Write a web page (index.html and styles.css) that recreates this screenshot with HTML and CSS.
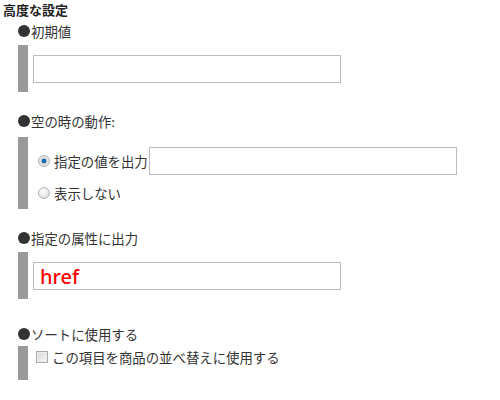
FILE: index.html
```html
<!DOCTYPE html>
<html lang="ja">
<head>
    <meta charset="UTF-8">
    <title>高度な設定</title>
    <link rel="stylesheet" href="styles.css">
</head>
<body>
    <div class="settings">
        <div class="settings-title">高度な設定</div>

        <div class="setting setting-first">
            <div class="setting-label">初期値</div>
            <div class="setting-body">
                <input type="text" class="text-input">
            </div>
        </div>

        <div class="setting setting-empty">
            <div class="setting-label">空の時の動作:</div>
            <div class="setting-body">
                <label class="option">
                    <input type="radio" name="empty" checked>
                    <span>指定の値を出力</span>
                    <input type="text" class="text-input inline-input">
                </label>
                <label class="option">
                    <input type="radio" name="empty">
                    <span>表示しない</span>
                </label>
            </div>
        </div>

        <div class="setting setting-attr">
            <div class="setting-label">指定の属性に出力</div>
            <div class="setting-body">
                <input type="text" class="text-input attr-input" value="href">
            </div>
        </div>

        <div class="setting setting-sort">
            <div class="setting-label">ソートに使用する</div>
            <div class="setting-body">
                <label class="option">
                    <input type="checkbox">
                    <span>この項目を商品の並べ替えに使用する</span>
                </label>
            </div>
        </div>
    </div>
</body>
</html>
```

FILE: styles.css
```css
body {
    margin: 0;
    padding: 0;
    background: #fff;
    color: #333;
    font-family: "Noto Sans CJK JP", "Noto Sans", sans-serif;
    font-size: 13.4px;
}
.settings {
    padding: 0 0 0 3px;
}
.settings-title {
    font-weight: bold;
    font-size: 13px;
    line-height: 20px;
    color: #222;
}
.setting {
    margin-left: 15px;
    margin-bottom: 19px;
}
.setting-first {
    margin-top: 1px;
}
.setting-label {
    display: flex;
    align-items: center;
    line-height: 20px;
    margin-bottom: 4px;
}
.setting-label::before {
    content: "";
    width: 12px;
    height: 12px;
    border-radius: 50%;
    background: #333;
    margin-right: 1px;
}
.setting-empty .setting-label {
    margin-bottom: 6px;
}
.setting-attr {
    margin-bottom: 25px;
}
.setting-sort .setting-label {
    margin-bottom: 2px;
}
.setting-body {
    border-left: 10px solid #9a9a9a;
    padding: 10px 0 9px 5px;
}
.setting-empty .setting-body {
    padding: 10px 0 6px 5px;
}
.setting-sort .setting-body {
    padding: 1px 0 13px 4px;
}
.text-input {
    box-sizing: border-box;
    width: 308px;
    height: 28px;
    border: 1px solid #bcbcbc;
    padding: 0 6px;
    margin: 0;
    font-family: inherit;
    display: block;
}
.attr-input {
    color: #f00;
    font-family: "Noto Sans", sans-serif;
    font-size: 20px;
    font-weight: 500;
    padding-top: 1px;
}
.option {
    display: flex;
    align-items: center;
    height: 20px;
}
.option + .option {
    margin-top: 8px;
}
.option:has(.inline-input) {
    height: 28px;
}
.inline-input {
    margin-left: 1px;
}
.option span {
    line-height: 20px;
}
input[type="radio"] {
    appearance: none;
    box-sizing: border-box;
    width: 12px;
    height: 12px;
    margin: 0 4px 0 5px;
    border: 1px solid #b5b5b5;
    border-radius: 50%;
    background: radial-gradient(circle at 40% 35%, #fff 0, #e4e4e4 70%, #cfcfcf 100%);
}
input[type="radio"]:checked {
    background: radial-gradient(circle, #1e7fcf 0, #0b5fa8 28%, #d9d9d9 38%, #f2f2f2 100%);
}
input[type="checkbox"] {
    appearance: none;
    box-sizing: border-box;
    width: 12px;
    height: 12px;
    margin: 0 4px 0 4px;
    border: 1px solid #a9a9a9;
    background: linear-gradient(135deg, #d8d8d8 0, #f6f6f6 100%);
    box-shadow: inset 0 0 0 1px #eee;
}
```
